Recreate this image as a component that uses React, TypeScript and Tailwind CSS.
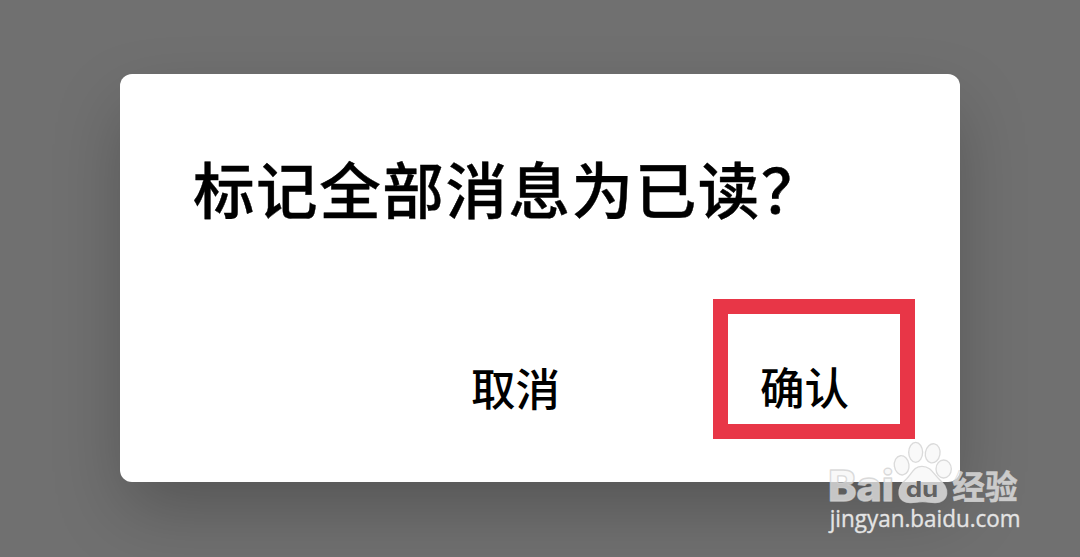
import React from "react";

const Watermark: React.FC = () => (
  <svg
    viewBox="0 0 690 360"
    className="absolute left-[810px] top-[430px] w-[230px] h-[120px] pointer-events-none"
    fill="#f6f6f6"
    fillOpacity={0.7}
    stroke="#cfcfcf"
    strokeOpacity={0.75}
    strokeWidth={4}
    strokeLinejoin="round"
  >
    {/* paw toes */}
    <ellipse cx="275" cy="106" rx="22" ry="29" transform="rotate(-8 275 106)" />
    <ellipse cx="317" cy="67" rx="21" ry="30" />
    <ellipse cx="368" cy="70" rx="22" ry="29" transform="rotate(10 368 70)" />
    <ellipse cx="401" cy="117" rx="23" ry="27" />
    {/* paw pad */}
    <path d="M336 109C312 109 306 130 290 146C273 160 265 172 267 192C269 210 285 219 303 218C318 217 326 215 338 215C350 215 358 217 374 218C393 219 408 208 410 192C412 172 400 160 387 147C370 130 361 109 336 109Z" />
    <text
      x="287"
      y="202"
      textLength="98"
      lengthAdjust="spacingAndGlyphs"
      fill="#5c5c5c"
      fillOpacity={0.95}
      stroke="none"
      className="font-['Inter',sans-serif] font-bold text-[66px]"
    >
      du
    </text>
    <text
      x="54"
      y="213"
      textLength="198"
      lengthAdjust="spacingAndGlyphs"
      className="font-['Inter',sans-serif] font-extrabold text-[126px]"
    >
      Bai
    </text>
    <text
      x="427"
      y="206"
      textLength="196"
      lengthAdjust="spacingAndGlyphs"
      strokeWidth={2}
      className="font-['Noto_Sans_CJK_SC',sans-serif] font-bold text-[100px]"
    >
      经验
    </text>
    <text
      x="59"
      y="290"
      textLength="573"
      lengthAdjust="spacingAndGlyphs"
      fill="#e4e4e4"
      fillOpacity={1}
      stroke="#e4e4e4"
      strokeWidth={1.5}
      className="font-['Open_Sans',sans-serif] font-normal text-[71px]"
    >
      jingyan.baidu.com
    </text>
  </svg>
);

const App: React.FC = () => {
  return (
    <div className="relative w-[1080px] h-[557px] overflow-hidden bg-[#707070] pt-[74px] font-['Noto_Sans_CJK_SC',sans-serif] text-black">
      <div className="mx-auto w-[840px] h-[408px] rounded-xl bg-white pt-[69px] shadow-[0_30px_70px_-6px_rgba(0,0,0,0.25)]">
        <h2 className="pl-[73px] text-[61.6px] tracking-[1.5px] leading-[90px] font-medium whitespace-nowrap [-webkit-text-stroke:0.4px_black]">
          标记全部消息为已读？
        </h2>

        {/* ACTIONS */}
        <div className="mt-[66px] pr-[45px] flex justify-end">
          <button className="h-[140px] mr-[153px] pb-[9px] pt-[44px] text-[44.5px] leading-[84px] font-medium">
            取消
          </button>
          <button className="w-[202px] h-[140px] border-[15.5px] border-[#e83647] pt-[30px] pl-[32px] text-left text-[44.5px] leading-[84px] font-medium">
            确认
          </button>
        </div>
      </div>

      <Watermark />
    </div>
  );
};

export default App;
